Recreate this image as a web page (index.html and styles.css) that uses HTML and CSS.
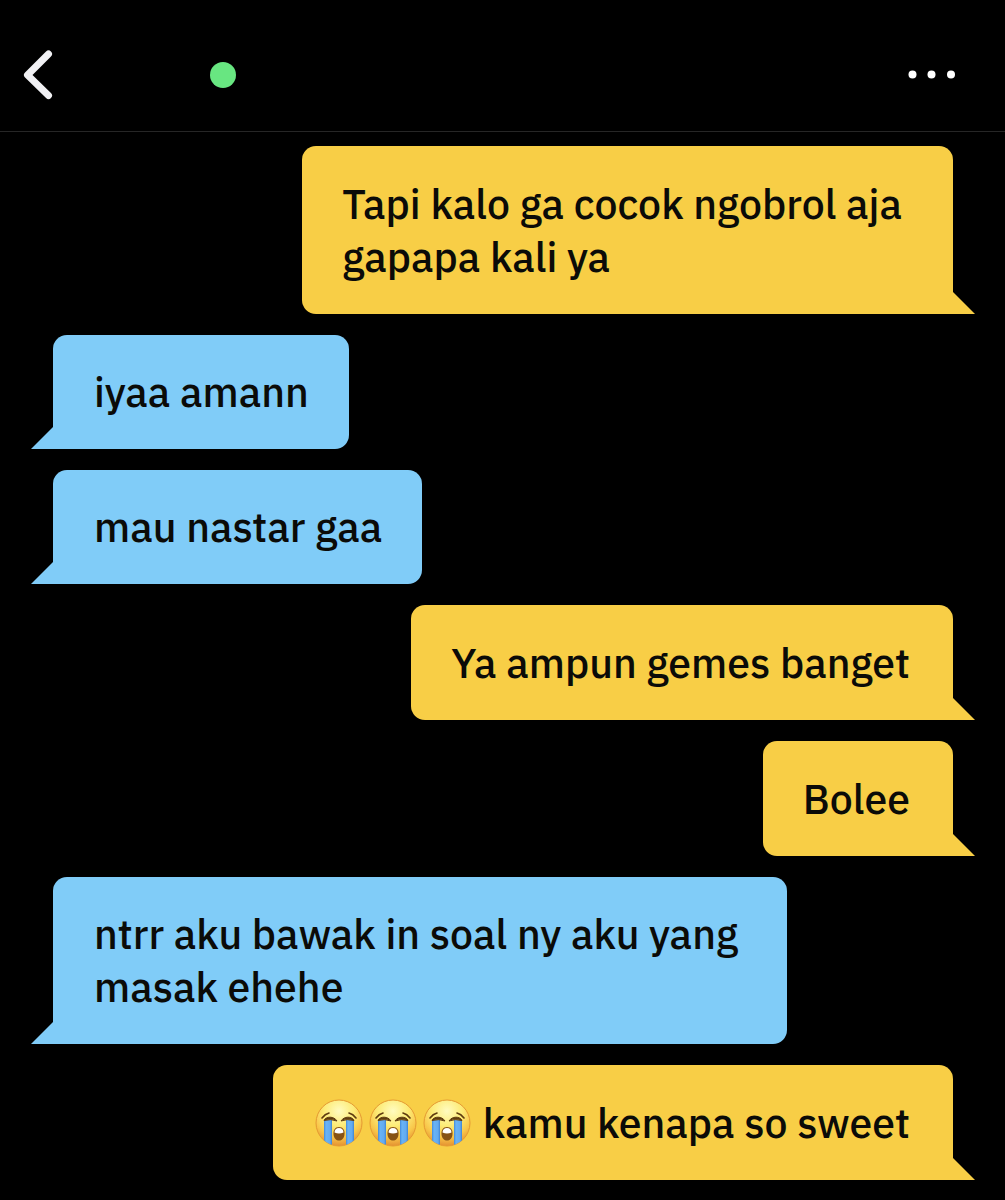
FILE: index.html
```html
<!DOCTYPE html>
<html lang="id">
<head>
<meta charset="utf-8">
<meta name="viewport" content="width=device-width, initial-scale=1">
<title>Chat</title>
<link rel="stylesheet" href="styles.css">
</head>
<body>
<svg class="defs" width="0" height="0" aria-hidden="true">
  <defs>
    <radialGradient id="face" cx="50%" cy="24%" r="80%">
      <stop offset="0" stop-color="#fffbc0"/>
      <stop offset=".4" stop-color="#fdec78"/>
      <stop offset=".72" stop-color="#f8c548"/>
      <stop offset="1" stop-color="#e0862c"/>
    </radialGradient>
    <linearGradient id="tear" x1="0" x2="1" y1="0" y2="0">
      <stop offset="0" stop-color="#4189d8"/>
      <stop offset=".25" stop-color="#69b3f5"/>
      <stop offset=".75" stop-color="#62aaf0"/>
      <stop offset="1" stop-color="#3f83d0"/>
    </linearGradient>
    <clipPath id="head"><circle cx="24" cy="24" r="23"/></clipPath>
    <symbol id="sob" viewBox="0 0 48 48">
      <circle cx="24" cy="24" r="23" fill="url(#face)" stroke="#e59a32"/>
      <g clip-path="url(#head)">
        <path d="M9 21h8v27H9z" fill="url(#tear)"/>
        <path d="M31 21h8v27h-8z" fill="url(#tear)"/>
      </g>
      <path d="M7 19q3-4 7-5M41 19q-3-4-7-5" fill="none" stroke="#5f3c10" stroke-width="1.600" stroke-linecap="round"/>
      <path d="M9 21.500C11 17 19 17 22 22Q16 19.500 9 21.500zM39 21.500C37 17 29 17 26 22Q32 19.500 39 21.500z" fill="#5f3c10" stroke="#5f3c10" stroke-linejoin="round"/>
      <path d="M24 28c-4 0-6 3.500-5.500 7.500.5 4 2.800 6 5.500 6s5-2 5.500-6c.5-4-1.500-7.500-5.500-7.500z" fill="#865214"/>
      <path d="M19.500 33.500q.2-4.500 4.500-4.500t4.500 4.500q-4.500 2-9 0z" fill="#fff"/>
    </symbol>
  </defs>
</svg>

<header class="topbar">
  <button class="icon-button" type="button" aria-label="Kembali">
    <svg width="30" height="50" viewBox="0 0 30 50" fill="none" stroke="#f1f1f4" stroke-width="7" stroke-linecap="round" stroke-linejoin="round"><path d="M25.500 4 4.500 25l21 20.500"/></svg>
  </button>
  <span class="status" role="img" aria-label="Online"></span>
  <button class="icon-button menu" type="button" aria-label="Menu">
    <svg width="48" height="10" viewBox="0 0 48 10" fill="#fff"><circle cx="4.500" cy="4.500" r="4"/><circle cx="23.500" cy="4.500" r="4"/><circle cx="43" cy="4.500" r="4"/></svg>
  </button>
</header>

<main class="chat">
  <p class="bubble sent wrapped">Tapi kalo ga cocok ngobrol aja<br>gapapa kali ya</p>
  <p class="bubble received">iyaa amann</p>
  <p class="bubble received">mau nastar gaa</p>
  <p class="bubble sent">Ya ampun gemes banget</p>
  <p class="bubble sent">Bolee</p>
  <p class="bubble received wrapped">ntrr aku bawak in soal ny aku yang<br>masak ehehe</p>
  <p class="bubble sent"><span class="emojis" role="img" aria-label="Menangis keras"><svg class="emoji"><use href="#sob"/></svg><svg class="emoji"><use href="#sob"/></svg><svg class="emoji"><use href="#sob"/></svg></span> kamu kenapa so sweet</p>
</main>
</body>
</html>
```
FILE: styles.css
```css
* {
  box-sizing: border-box;
}

body {
  margin: 0;
  min-height: 100vh;
  background: #000;
  color: #0b0b08;
  font-family: "IBM Plex Sans", "Open Sans", sans-serif;
  font-size: 41px;
  font-weight: 500;
  line-height: 53px;
}

.defs {
  position: absolute;
}

.topbar {
  display: flex;
  align-items: center;
  height: 132px;
  padding: 18px 49px 0 23px;
  border-bottom: 1px solid #262626;
}

.icon-button {
  display: flex;
  padding: 0;
  border: 0;
  background: none;
}

.menu {
  margin-left: auto;
}

.status {
  width: 26px;
  height: 26px;
  margin-left: 157px;
  border-radius: 50%;
  background: #68e681;
}

.chat {
  display: flex;
  flex-direction: column;
  gap: 21px;
  padding: 14px 52px 20px 53px;
}

.bubble {
  position: relative;
  max-width: 83%;
  margin: 0;
  border-radius: 14px;
}

.bubble::after {
  content: "";
  position: absolute;
  bottom: 0;
  width: 22px;
  height: 22px;
  background: inherit;
}

.sent {
  align-self: flex-end;
  padding: 31px 43px 31px 40px;
  border-bottom-right-radius: 0;
  background: #f8ce46;
}

.sent::after {
  left: 100%;
  clip-path: polygon(0 0, 100% 100%, 0 100%);
}

.received {
  align-self: flex-start;
  padding: 30px 40px 31px 41px;
  border-bottom-left-radius: 0;
  background: #80ccf8;
}

.received::after {
  right: 100%;
  clip-path: polygon(100% 0, 100% 100%, 0 100%);
}

.wrapped {
  padding-right: 51px;
}

.received.wrapped {
  padding-right: 49px;
}

.emojis {
  display: inline-flex;
  gap: 6px;
  padding: 0 2px;
  vertical-align: -9px;
}

.emoji {
  width: 48px;
  height: 48px;
}
```
